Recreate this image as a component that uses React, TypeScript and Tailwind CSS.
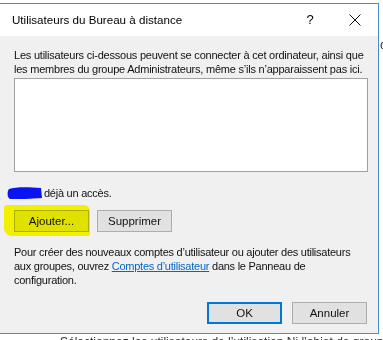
import React from 'react';

const font = { fontFamily: '"Liberation Sans", Arial, sans-serif' };

function WinButton({ label, primary }: { label: string; primary?: boolean }) {
  return (
    <button
      className={`w-[75px] h-[22px] flex items-center justify-center text-[11.5px] text-[#111] bg-[#e1e1e1] ${
        primary ? 'border-2 border-[#0078d7]' : 'border border-[#adadad]'
      }`}
    >
      {label}
    </button>
  );
}

function App() {
  return (
    <div className="w-[383px] h-[340px] bg-white overflow-hidden flex flex-col" style={font}>
      <div className="h-[3px] shrink-0 bg-white" />
      <div className="flex shrink-0">
        {/* Dialog */}
        <div className="w-[379px] h-[331px] flex flex-col border-t border-r border-b border-[#4a8ccb] shrink-0">
          {/* Title bar */}
          <div className="h-[32px] bg-white flex items-center pl-[12px] shrink-0">
            <span className="text-[11.6px] text-black flex-1">Utilisateurs du Bureau à distance</span>
            <span className="text-[13px] text-black w-[20px] text-center mr-[29px]">?</span>
            <svg width="12" height="12" viewBox="0 0 12 12" className="mr-[17px]">
              <path d="M0.5 0.5 L11.5 11.5 M11.5 0.5 L0.5 11.5" stroke="#111" strokeWidth="1" fill="none" />
            </svg>
          </div>

          {/* Body */}
          <div className="flex-1 bg-[#f0f0f0] flex flex-col pl-[14px] pr-[10px] text-[11px] text-[#111] leading-[14px] whitespace-nowrap">
            <p className="mt-[12px] tracking-[-0.22px]">
              Les utilisateurs ci-dessous peuvent se connecter à cet ordinateur, ainsi que
              <br />
              les membres du groupe Administrateurs, même s’ils n’apparaissent pas ici.
            </p>
            <div className="mt-[2px] w-[354px] h-[94px] bg-white border border-[#a0a0a0]" />

            <div className="mt-[14px] flex items-center h-[14px]">
              <svg width="36" height="14" viewBox="0 0 36 14" className="-ml-[7px]">
                <path
                  d="M2 3 C8 1 20 1 34 2 L35 12 C24 13 12 13 3 13 C0 12 0 5 2 3 Z"
                  fill="#0a14f0"
                />
              </svg>
              <span className="ml-[1px] tracking-[-0.25px]">déjà un accès.</span>
            </div>

            <div className="mt-[10px] flex gap-[8px] relative">
              <div className="absolute -left-[10px] -top-[5px] w-[86px] h-[31px] bg-[#ffff00] mix-blend-multiply rounded-[3px_6px_2px_8px]" />
              <WinButton label="Ajouter..." />
              <WinButton label="Supprimer" />
            </div>

            <p className="mt-[13px] tracking-[-0.25px]">
              Pour créer des nouveaux comptes d’utilisateur ou ajouter des utilisateurs
              <br />
              aux groupes, ouvrez <span className="text-[#0066cc] underline">Comptes d’utilisateur</span> dans le Panneau de
              <br />
              configuration.
            </p>

            <div className="mt-auto mb-[9px] flex justify-end gap-[10px] pr-[1px]">
              <WinButton label="OK" primary />
              <WinButton label="Annuler" />
            </div>
          </div>
        </div>
        {/* Window behind, right edge */}
        <div className="flex-1 pt-[33px] pl-[1px] text-[12px] text-[#222]">c</div>
      </div>
      {/* Window behind, bottom edge */}
      <div className="pl-[60px] pt-[1px] text-[12px] leading-[14px] text-[#333] whitespace-nowrap">
        Sélectionnez les utilisateurs de l’utilisation Ni l’objet de groupe
      </div>
    </div>
  );
}

export default App;
